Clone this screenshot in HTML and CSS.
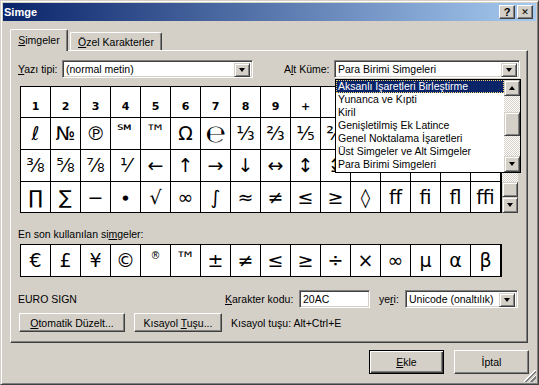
FILE: index.html
```html
<!doctype html>
<html>
<head>
<meta charset="utf-8">
<title>Simge</title>
<link rel="stylesheet" href="styles.css">
</head>
<body>
<div class="window">
    <div class="titlebar">
        <span class="title">Simge</span>
        <div class="title-btns">
            <span class="tbtn">?</span>
            <span class="tbtn close">&#x2715;</span>
        </div>
    </div>
    <div class="content">
        <div class="tabs">
            <div class="tab active"><span><u>S</u>imgeler</span></div>
            <div class="tab"><span><u>Ö</u>zel Karakterler</span></div>
        </div>
        <div class="panel">
            <div class="font-row">
                <span class="lbl-font"><u>Y</u>azı tipi:</span>
                <div class="select sel-font"><span class="sel-text">(normal metin)</span><span class="dd-btn"><i class="arr-down"></i></span></div>
                <span class="lbl-sub">A<u>l</u>t Küme:</span>
                <div class="select sel-sub"><span class="sel-text">Para Birimi Simgeleri</span><span class="dd-btn"><i class="arr-down"></i></span>
                    <div class="dd-list">
                        <ul>
                            <li class="on">Aksanlı İşaretleri Birleştirme</li>
                            <li>Yunanca ve Kıpti</li>
                            <li>Kiril</li>
                            <li>Genişletilmiş Ek Latince</li>
                            <li>Genel Noktalama İşaretleri</li>
                            <li>Üst Simgeler ve Alt Simgeler</li>
                            <li>Para Birimi Simgeleri</li>
                        </ul>
                        <div class="sbar">
                            <span class="sb-btn"><i class="arr-up"></i></span>
                            <div class="sb-track small"><span class="sb-thumb"></span></div>
                            <span class="sb-btn"><i class="arr-down"></i></span>
                        </div>
                    </div>
                </div>
            </div>

            <div class="grid-wrap">
                <div class="symbols">
                    <span class="num">1</span><span class="num">2</span><span class="num">3</span><span class="num">4</span><span class="num">5</span><span class="num">6</span><span class="num">7</span><span class="num">8</span><span class="num">9</span><span class="num">+</span><span></span><span></span><span></span><span></span><span></span><span></span>
                    <span>ℓ</span><span>№</span><span>℗</span><span class="tm">℠</span><span class="tm">™</span><span>Ω</span><span class="big">℮</span><span>⅓</span><span>⅔</span><span>⅕</span><span>⅖</span><span></span><span></span><span></span><span></span><span></span>
                    <span>⅜</span><span>⅝</span><span>⅞</span><span>⅟</span><span>←</span><span>↑</span><span>→</span><span>↓</span><span>↔</span><span>↕</span><span>↨</span><span></span><span></span><span></span><span></span><span></span>
                    <span>∏</span><span>∑</span><span>−</span><span>∙</span><span>√</span><span>∞</span><span>∫</span><span>≈</span><span>≠</span><span>≤</span><span>≥</span><span>◊</span><span>ﬀ</span><span>ﬁ</span><span>ﬂ</span><span>ﬃ</span>
                </div>
                <div class="sbar main-sbar">
                    <span class="sb-btn"><i class="arr-up"></i></span>
                    <div class="sb-track"><span class="sb-thumb"></span></div>
                    <span class="sb-btn"><i class="arr-down"></i></span>
                </div>
            </div>

            <div class="recent-lbl">En son kullanılan si<u>m</u>geler:</div>
            <div class="symbols recent">
                <span>€</span><span>£</span><span>¥</span><span>©</span><span class="sup">®</span><span class="tm">™</span><span>±</span><span>≠</span><span>≤</span><span>≥</span><span>÷</span><span>×</span><span>∞</span><span>µ</span><span>α</span><span>β</span>
            </div>

            <div class="info-row">
                <span class="char-name">EURO SIGN</span>
                <span class="lbl-code"><u>K</u>arakter kodu:</span>
                <div class="field code">20AC</div>
                <span class="lbl-from">ye<u>r</u>i:</span>
                <div class="select sel-from"><span class="sel-text">Unicode (onaltılık)</span><span class="dd-btn"><i class="arr-down"></i></span></div>
            </div>

            <div class="btn-row">
                <span class="btn auto"><span><u>O</u>tomatik Düzelt...</span></span>
                <span class="btn shortcut"><span>Kısayol <u>T</u>uşu...</span></span>
                <span class="shortcut-txt">Kısayol tuşu: Alt+Ctrl+E</span>
            </div>
        </div>

        <div class="footer">
            <span class="btn default"><span><u>E</u>kle</span></span>
            <span class="btn"><span>İptal</span></span>
        </div>
    </div>
    <div class="grip"></div>
</div>
</body>
</html>
```

FILE: styles.css
```css
*{margin: 0; padding: 0; box-sizing: border-box;}
html,body{width: 100%; height: 100%; overflow: hidden;}
body{background: #d4d0c8; font-family: "Liberation Sans", "DejaVu Sans", sans-serif; font-size: 10.5px; color: #000;}
u{text-decoration: underline; text-underline-offset: 1px;}

.window{position: relative; width: 539px; height: 385px; background: #d4d0c8; border: 1px solid; border-color: #d4d0c8 #404040 #404040 #d4d0c8; box-shadow: inset 1px 1px #fff, inset -1px -1px #808080; padding: 2px;}

.titlebar{height: 18px; display: flex; align-items: center; justify-content: space-between; padding: 0 3px 0 1px; background: linear-gradient(to right, #0a246a, #a6caf0);}
.title{color: #fff; font-weight: bold; font-size: 11px;}
.title-btns{display: flex; gap: 2px;}
.tbtn{width: 16px; height: 14px; display: flex; align-items: center; justify-content: center; background: #d4d0c8; border: 1px solid; border-color: #fff #404040 #404040 #fff; box-shadow: inset -1px -1px #808080; font-weight: bold; font-size: 11px; line-height: 1;}
.tbtn.close{font-size: 9px;}

.content{padding: 8px 7px 0 7px;}

.tabs{display: flex; height: 21px; align-items: flex-end; position: relative; z-index: 2;}
.tab{height: 18px; padding: 0 6px; display: flex; align-items: center; justify-content: center; background: #d4d0c8; border: 1px solid; border-bottom: none; border-color: #fff #404040 #404040 #fff; box-shadow: inset -1px 0 #808080; border-radius: 2px 2px 0 0;}
.tab.active{height: 22px; width: 58px; margin-bottom: -1px; padding-bottom: 1px;}
.tab:not(.active){width: 92px; margin-left: 2px;}

.panel{width: 518px; height: 293px; border: 1px solid; border-color: #fff #404040 #404040 #fff; box-shadow: inset -1px -1px #808080; padding: 9px 0 0 7px;}

.font-row{display: flex; align-items: center; height: 18px;}
.lbl-font{width: 44px;}
.lbl-sub{margin-left: 31px; width: 50px;}
.select{position: relative; height: 18px; display: flex; background: #fff; border: 1px solid; border-color: #808080 #fff #fff #808080; box-shadow: inset 1px 1px #404040, inset -1px -1px #d4d0c8; padding: 2px;}
.sel-text{flex: 1; padding-left: 1px; line-height: 12px; white-space: nowrap; overflow: hidden;}
.dd-btn{width: 16px; height: 14px; display: flex; align-items: center; justify-content: center; background: #d4d0c8; border: 1px solid; border-color: #d4d0c8 #404040 #404040 #d4d0c8; box-shadow: inset 1px 1px #fff, inset -1px -1px #808080;}
.sel-font{width: 191px;}
.sel-sub{width: 186px;}
.arr-down{display: block; width: 0; height: 0; border-left: 3.5px solid transparent; border-right: 3.5px solid transparent; border-top: 4px solid #000;}
.arr-up{display: block; width: 0; height: 0; border-left: 3.5px solid transparent; border-right: 3.5px solid transparent; border-bottom: 4px solid #000;}

.dd-list{position: absolute; left: 0; top: 18px; width: 186px; height: 94px; background: #fff; border: 1px solid #000; display: flex; z-index: 5;}
.dd-list ul{flex: 1; list-style: none;}
.dd-list li{height: 13px; line-height: 13px; padding-left: 2px; white-space: nowrap;}
.dd-list li.on{background: #0a246a; color: #fff; outline: 1px dotted #f5d76e; outline-offset: -1px;}

.sbar{width: 16px; display: flex; flex-direction: column;}
.sb-btn{width: 16px; height: 16px; display: flex; align-items: center; justify-content: center; background: #d4d0c8; border: 1px solid; border-color: #d4d0c8 #404040 #404040 #d4d0c8; box-shadow: inset 1px 1px #fff, inset -1px -1px #808080;}
.sb-track{flex: 1; display: flex; flex-direction: column; justify-content: flex-end; background: repeating-conic-gradient(#fff 0 25%, #d4d0c8 0 50%) 0 0 / 2px 2px;}
.sb-track.small{justify-content: flex-start; padding-top: 16px;}
.sb-thumb{height: 15px; background: #d4d0c8; border: 1px solid; border-color: #d4d0c8 #404040 #404040 #d4d0c8; box-shadow: inset 1px 1px #fff, inset -1px -1px #808080;}
.sb-track.small .sb-thumb{height: 24px;}

.grid-wrap{display: flex; margin: 8px 0 0 2px; height: 127px;}
.symbols{display: grid; grid-template-columns: repeat(16, 29px); grid-template-rows: 30px 31px 31px 30px; gap: 1px; padding: 1px; background: #000; width: 482px; font-family: "DejaVu Sans", sans-serif; font-size: 19px;}
.symbols span{background: #fff; display: flex; align-items: center; justify-content: center; overflow: hidden; line-height: 1;}
.symbols .num{font-size: 11px; font-weight: bold; align-items: flex-end; padding-bottom: 5px;}
.symbols .sup{font-size: 10px; align-items: flex-start; padding-top: 6px;}
.symbols .tm{font-size: 20px; align-items: flex-start; padding-top: 4px;}
.symbols .big{font-size: 24px;}
.main-sbar{height: 127px;}

.recent-lbl{margin-top: 15px; line-height: 12px;}
.symbols.recent{margin: 4px 0 0 2px; grid-template-rows: 31px; width: 482px;}

.info-row{display: flex; align-items: center; height: 18px; margin-top: 13px;}
.char-name{width: 207px;}
.lbl-code{width: 74px;}
.field{height: 18px; background: #fff; border: 1px solid; border-color: #808080 #fff #fff #808080; box-shadow: inset 1px 1px #404040, inset -1px -1px #d4d0c8; padding: 2px 3px; line-height: 12px;}
.code{width: 71px;}
.lbl-from{margin-left: 9px; width: 26px;}
.sel-from{width: 113px;}

.btn-row{display: flex; align-items: center; height: 19px; margin-top: 5px;}
.btn{height: 19px; display: flex; align-items: center; justify-content: center; background: #d4d0c8; border: 1px solid; border-color: #fff #404040 #404040 #fff; box-shadow: inset -1px -1px #808080; white-space: nowrap;}
.btn.auto{width: 106px; margin-left: 1px;}
.btn.shortcut{width: 88px; margin-left: 9px;}
.shortcut-txt{margin-left: 9px;}

.footer{display: flex; justify-content: flex-end; gap: 10px; margin-top: 7px;}
.footer .btn{width: 75px; height: 24px;}
.footer .btn.default{border: 1px solid #000; box-shadow: inset 1px 1px #fff, inset -1px -1px #404040, inset -2px -2px #808080;}

.grip{position: absolute; right: 2px; bottom: 2px; width: 12px; height: 12px; background: linear-gradient(135deg, transparent 0 45%, #fff 45% 52%, #808080 52% 62%, transparent 62% 68%, #fff 68% 75%, #808080 75% 85%, transparent 85%);}
```
